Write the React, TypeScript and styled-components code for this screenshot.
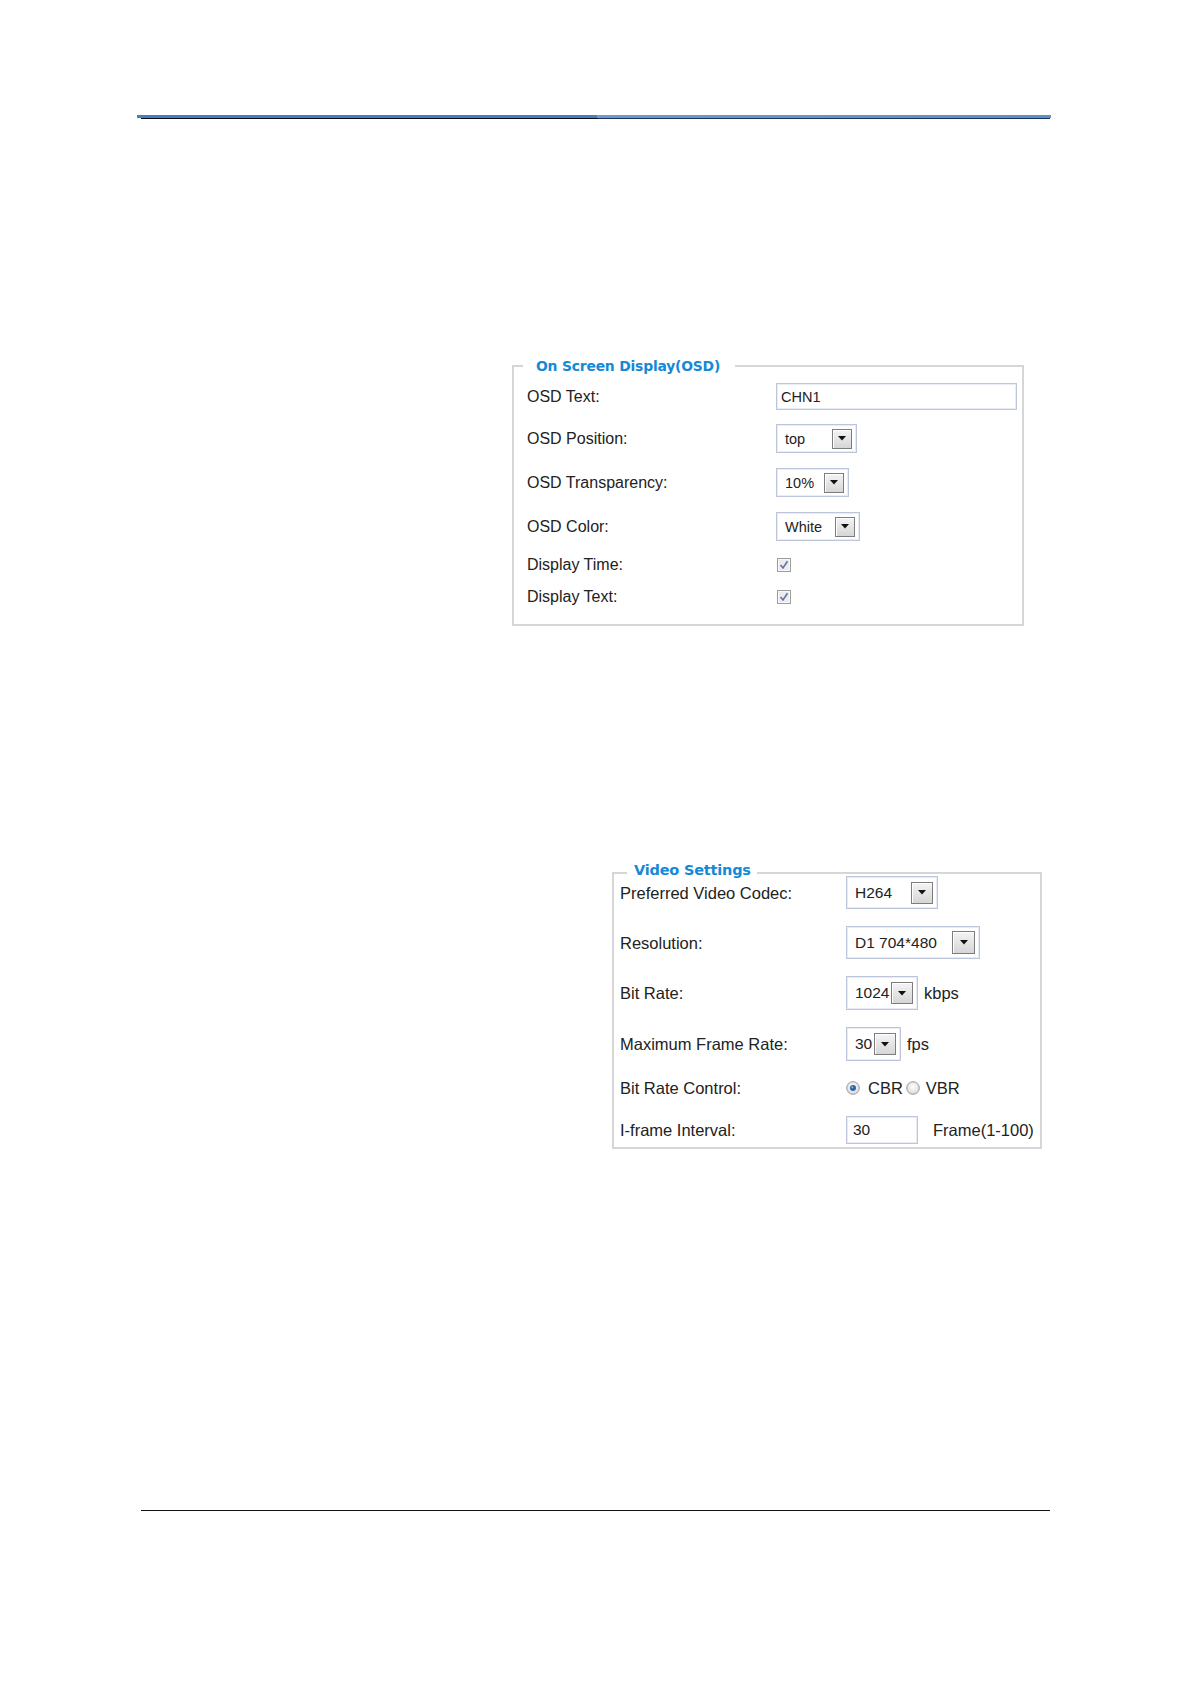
import React from "react";
import styled, { createGlobalStyle } from "styled-components";

const GlobalStyle = createGlobalStyle`
    html, body {
        margin: 0;
        padding: 0;
        background: #ffffff;
    }
    body {
        font-family: "Liberation Sans", Arial, sans-serif;
        color: #222222;
    }
`;

const Page = styled.div`
    box-sizing: border-box;
    width: 1191px;
    height: 1684px;
    padding-top: 115px;
    padding-bottom: 173px;
    display: flex;
    flex-direction: column;
    background: #ffffff;
`;

const HeaderRule = styled.div`
    display: flex;
    flex-direction: column;
    margin-left: 137px;
    width: 914px;
`;

const RuleBar = styled.div`
    height: 3px;
    background: linear-gradient(
        to right,
        #4a7dbb 0%,
        #4a7dbb 50.3%,
        #6c9ad1 50.3%,
        #5e8ecb 100%
    );
`;

const RuleShadow = styled.div`
    height: 1px;
    margin-left: 4px;
    margin-right: 1px;
    background: linear-gradient(to right, #0b0f18 0%, #0b0f18 50.3%, #1c3457 50.3%, #1c3457 100%);
`;

const FooterRule = styled.div`
    margin-top: auto;
    margin-left: 141px;
    width: 909px;
    height: 1px;
    background: #111111;
`;

const Fieldset = styled.fieldset<{
    $left: number;
    $width: number;
    $top: number;
    $padL: number;
    $padR: number;
    $padBottom: number;
}>`
    box-sizing: border-box;
    margin: ${({ $top }) => $top}px 0 0 ${({ $left }) => $left}px;
    width: ${({ $width }) => $width}px;
    min-width: 0;
    padding: 0 ${({ $padR }) => $padR}px ${({ $padBottom }) => $padBottom}px ${({ $padL }) => $padL}px;
    border: 2px solid #d6d6d6;
    display: flex;
    flex-direction: column;
`;

const Legend = styled.legend<{
    $size: number;
    $line: number;
    $ml: number;
    $pl: number;
    $pr: number;
    $mb: number;
    $lift: number;
}>`
    font-family: "DejaVu Sans", Verdana, sans-serif;
    font-weight: bold;
    font-size: ${({ $size }) => $size}px;
    line-height: ${({ $line }) => $line}px;
    color: #1589d6;
    margin-left: ${({ $ml }) => $ml}px;
    margin-bottom: ${({ $mb }) => $mb}px;
    padding: 0 ${({ $pr }) => $pr}px ${({ $lift }) => $lift}px ${({ $pl }) => $pl}px;
    letter-spacing: -0.2px;
`;

const Row = styled.div<{ $h: number; $mt: number }>`
    display: flex;
    align-items: center;
    height: ${({ $h }) => $h}px;
    margin-top: ${({ $mt }) => $mt}px;
`;

const Label = styled.span<{ $w: number; $size: number }>`
    flex: 0 0 ${({ $w }) => $w}px;
    font-size: ${({ $size }) => $size}px;
    line-height: 20px;
    color: #222222;
    white-space: nowrap;
`;

const TextInput = styled.div<{ $w: number; $h: number; $size: number; $pad: number }>`
    box-sizing: border-box;
    flex: 0 0 ${({ $w }) => $w}px;
    height: ${({ $h }) => $h}px;
    display: flex;
    align-items: center;
    padding-left: ${({ $pad }) => $pad}px;
    border: 1px solid #bcc5da;
    box-shadow: inset 0 0 0 1px #e8ecf4;
    background: #ffffff;
    font-size: ${({ $size }) => $size}px;
    color: #222222;
`;

const SelectBox = styled.div<{ $w: number; $h: number; $size: number }>`
    box-sizing: border-box;
    flex: 0 0 ${({ $w }) => $w}px;
    height: ${({ $h }) => $h}px;
    display: flex;
    align-items: center;
    justify-content: space-between;
    padding: 0 4px 0 8px;
    border: 1px solid #bcc5da;
    box-shadow: inset 0 0 0 1px #e8ecf4;
    background: #ffffff;
    font-size: ${({ $size }) => $size}px;
    color: #222222;
`;

const DropButton = styled.span<{ $s: number }>`
    box-sizing: border-box;
    width: ${({ $s }) => $s}px;
    height: ${({ $s }) => $s}px;
    display: flex;
    align-items: center;
    justify-content: center;
    border: 1px solid #7d7d7d;
    box-shadow: inset 1px 1px 0 #ffffff;
    background: linear-gradient(to bottom, #f4f4f4, #d6d6d6);
`;

const Suffix = styled.span<{ $ml: number }>`
    margin-left: ${({ $ml }) => $ml}px;
    font-size: 16.5px;
    line-height: 20px;
    color: #222222;
`;

const RadioGroup = styled.div`
    display: flex;
    align-items: center;
`;

const RadioText = styled.span<{ $ml: number; $mr: number }>`
    margin-left: ${({ $ml }) => $ml}px;
    margin-right: ${({ $mr }) => $mr}px;
    font-size: 16.5px;
    line-height: 20px;
    color: #222222;
`;

const Arrow = () => (
    <svg width="8" height="5" viewBox="0 0 8 5">
        <path d="M0 0 H8 L4 4.5 Z" fill="#111111" />
    </svg>
);

const Select: React.FC<{ value: string; w: number; h: number; size: number; btn: number }> = ({
    value,
    w,
    h,
    size,
    btn,
}) => (
    <SelectBox $w={w} $h={h} $size={size}>
        <span>{value}</span>
        <DropButton $s={btn}>
            <Arrow />
        </DropButton>
    </SelectBox>
);

const Checkbox = () => (
    <svg width="14" height="14" viewBox="0 0 14 14">
        <rect x="0.5" y="0.5" width="13" height="13" fill="#ececec" stroke="#9e9e9e" />
        <rect x="1.5" y="1.5" width="11" height="11" fill="none" stroke="#f8f8f8" />
        <path d="M3.5 7 L6 10 L10.5 3.2" fill="none" stroke="#5f74ad" strokeWidth="1.6" />
    </svg>
);

const Radio: React.FC<{ checked?: boolean }> = ({ checked }) => (
    <svg width="14" height="14" viewBox="0 0 14 14">
        <defs>
            <radialGradient id={checked ? "rOn" : "rOff"} cx="50%" cy="40%" r="60%">
                <stop offset="0%" stopColor="#ffffff" />
                <stop offset="100%" stopColor="#d8d8d8" />
            </radialGradient>
        </defs>
        <circle cx="7" cy="7" r="6.3" fill={`url(#${checked ? "rOn" : "rOff"})`} stroke="#9a9a9a" />
        {checked && <circle cx="7" cy="7" r="3" fill="#2b63a8" />}
        {checked && <circle cx="6.3" cy="6.2" r="1" fill="#8fb6e6" />}
    </svg>
);

const OSD_LABEL_W = 249;
const VIDEO_LABEL_W = 226;

const App: React.FC = () => {
    return (
        <>
            <GlobalStyle />
            <Page>
                <HeaderRule>
                    <RuleBar />
                    <RuleShadow />
                </HeaderRule>

                <Fieldset $left={512} $width={512} $top={237} $padL={13} $padR={4} $padBottom={20}>
                    <Legend $size={13.9} $line={20} $ml={-4} $pl={13} $pr={15} $mb={0} $lift={0}>
                        On Screen Display(OSD)
                    </Legend>
                    <Row $h={27} $mt={7}>
                        <Label $w={OSD_LABEL_W} $size={16}>OSD Text:</Label>
                        <TextInput $w={241} $h={27} $size={14.5} $pad={4}>
                            CHN1
                        </TextInput>
                    </Row>
                    <Row $h={29} $mt={14}>
                        <Label $w={OSD_LABEL_W} $size={16}>OSD Position:</Label>
                        <Select value="top" w={81} h={29} size={14.5} btn={20} />
                    </Row>
                    <Row $h={29} $mt={15}>
                        <Label $w={OSD_LABEL_W} $size={16}>OSD Transparency:</Label>
                        <Select value="10%" w={73} h={29} size={14.5} btn={20} />
                    </Row>
                    <Row $h={29} $mt={15}>
                        <Label $w={OSD_LABEL_W} $size={16}>OSD Color:</Label>
                        <Select value="White" w={84} h={29} size={14.5} btn={20} />
                    </Row>
                    <Row $h={14} $mt={17}>
                        <Label $w={OSD_LABEL_W + 1} $size={16}>Display Time:</Label>
                        <Checkbox />
                    </Row>
                    <Row $h={14} $mt={18}>
                        <Label $w={OSD_LABEL_W + 1} $size={16}>Display Text:</Label>
                        <Checkbox />
                    </Row>
                </Fieldset>

                <Fieldset $left={612} $width={430} $top={233} $padL={6} $padR={2} $padBottom={3}>
                    <Legend $size={14.5} $line={22} $ml={7} $pl={7} $pr={6} $mb={-11} $lift={6}>
                        Video Settings
                    </Legend>
                    <Row $h={33} $mt={0}>
                        <Label $w={VIDEO_LABEL_W} $size={16.5}>Preferred Video Codec:</Label>
                        <Select value="H264" w={92} h={33} size={15.5} btn={22} />
                    </Row>
                    <Row $h={33} $mt={17}>
                        <Label $w={VIDEO_LABEL_W} $size={16.5}>Resolution:</Label>
                        <Select value="D1 704*480" w={134} h={33} size={15.5} btn={23} />
                    </Row>
                    <Row $h={34} $mt={17}>
                        <Label $w={VIDEO_LABEL_W} $size={16.5}>Bit Rate:</Label>
                        <Select value="1024" w={72} h={34} size={15.5} btn={22} />
                        <Suffix $ml={6}>kbps</Suffix>
                    </Row>
                    <Row $h={34} $mt={17}>
                        <Label $w={VIDEO_LABEL_W} $size={16.5}>Maximum Frame Rate:</Label>
                        <Select value="30" w={55} h={34} size={15.5} btn={22} />
                        <Suffix $ml={6}>fps</Suffix>
                    </Row>
                    <Row $h={16} $mt={19}>
                        <Label $w={VIDEO_LABEL_W} $size={16.5}>Bit Rate Control:</Label>
                        <RadioGroup>
                            <Radio checked />
                            <RadioText $ml={8} $mr={3}>CBR</RadioText>
                            <Radio />
                            <RadioText $ml={6} $mr={0}>VBR</RadioText>
                        </RadioGroup>
                    </Row>
                    <Row $h={28} $mt={20}>
                        <Label $w={VIDEO_LABEL_W} $size={16.5}>I-frame Interval:</Label>
                        <TextInput $w={72} $h={28} $size={15.5} $pad={6}>
                            30
                        </TextInput>
                        <Suffix $ml={15}>Frame(1-100)</Suffix>
                    </Row>
                </Fieldset>

                <FooterRule />
            </Page>
        </>
    );
};

export default App;
